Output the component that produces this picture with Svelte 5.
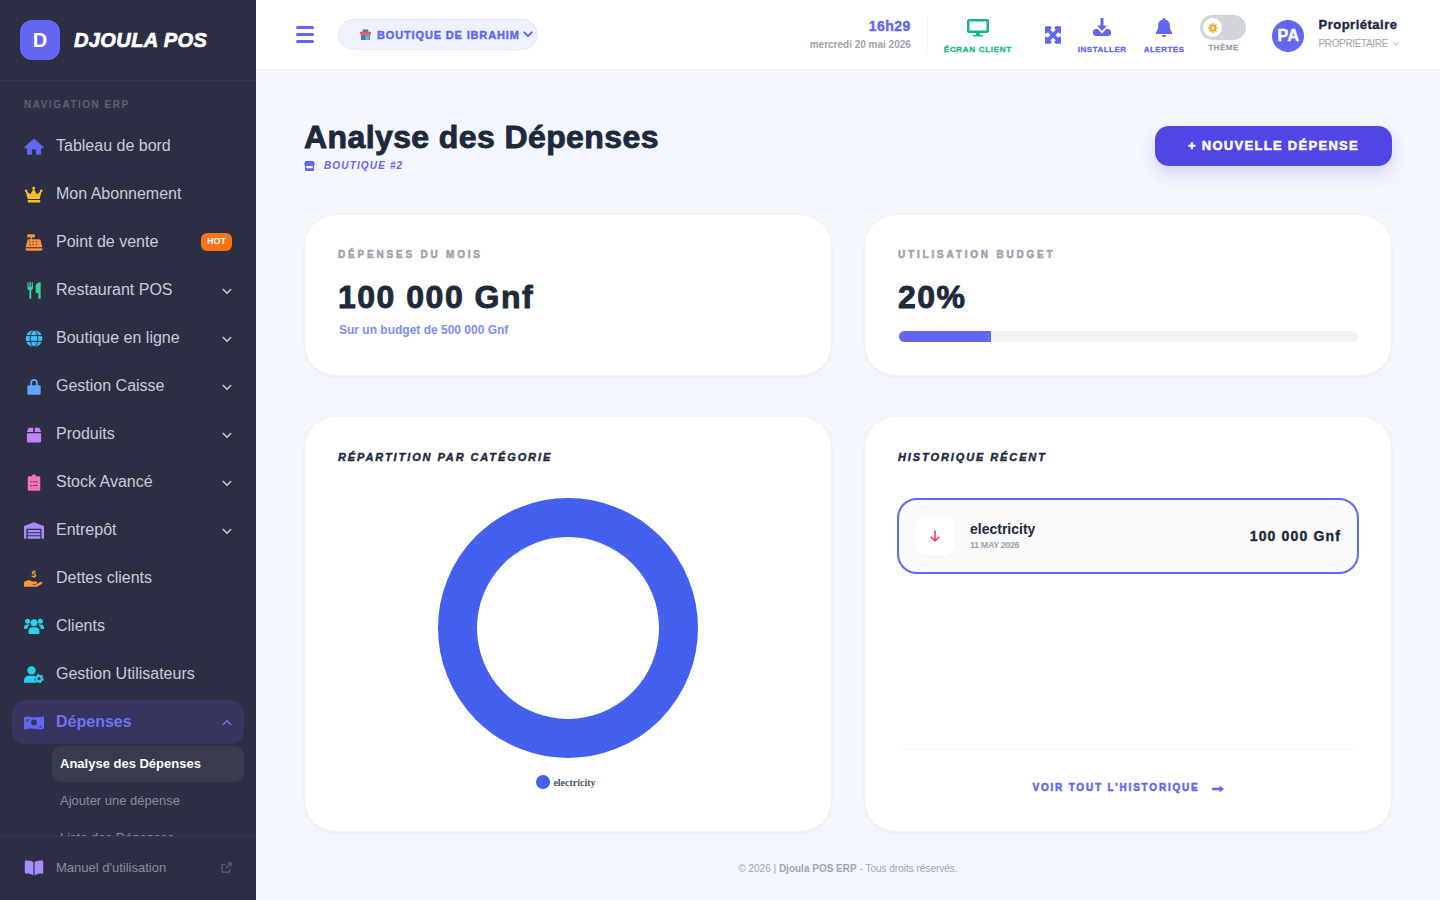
<script>
  const navItems = [
    { label: 'Tableau de bord', icon: 'home', color: '#6366f1' },
    { label: 'Mon Abonnement', icon: 'crown', color: '#fbbf24' },
    { label: 'Point de vente', icon: 'register', color: '#fb923c', hot: true },
    { label: 'Restaurant POS', icon: 'utensils', color: '#34d399', arrow: true },
    { label: 'Boutique en ligne', icon: 'globe', color: '#38bdf8', arrow: true },
    { label: 'Gestion Caisse', icon: 'lock', color: '#60a5fa', arrow: true },
    { label: 'Produits', icon: 'box', color: '#c084fc', arrow: true },
    { label: 'Stock Avancé', icon: 'clipboard', color: '#f472b6', arrow: true },
    { label: 'Entrepôt', icon: 'warehouse', color: '#a78bfa', arrow: true },
    { label: 'Dettes clients', icon: 'hand', color: '#fb923c' },
    { label: 'Clients', icon: 'users', color: '#22d3ee' },
    { label: 'Gestion Utilisateurs', icon: 'usercog', color: '#22d3ee' }
  ];
</script>

{#snippet chevron(up)}
  <svg class="chev" class:up viewBox="0 0 12 8" width="10" height="7"><path d="M1.500 1.500 6 6l4.500-4.500" fill="none" stroke="currentColor" stroke-width="1.800" stroke-linecap="round" stroke-linejoin="round"/></svg>
{/snippet}

{#snippet navIcon(name, color)}
  <svg class="nav-icon" viewBox="0 0 24 20" width="20" height="17" fill={color}>
    {#if name === 'home'}
      <path d="M12 .5.6 10.600a.8.8 0 0 0 .5 1.400H3.500v6.800a1 1 0 0 0 1 1.200h5v-6.500h5V20h5a1 1 0 0 0 1-1.200V12h2.400a.8.8 0 0 0 .5-1.400z"/>
    {:else if name === 'crown'}
      <path d="M4.500 16.500h15v1.800a1.200 1.200 0 0 1-1.200 1.200H5.700a1.200 1.200 0 0 1-1.200-1.200zM4.400 15.500 2.400 7.200a1.600 1.600 0 1 1 1.400-.6l3.900 3 3.200-5.600a1.700 1.700 0 1 1 1.400 0l3.200 5.600 3.900-3a1.600 1.600 0 1 1 1.400.6l-2 8.300z"/>
    {:else if name === 'register'}
      <path d="M4 0h9v4H9.500v2H18a2 2 0 0 1 2 1.700l2 8H2l2-8A2 2 0 0 1 6 6h2V4H4zM2 17h20v1.400a1.600 1.600 0 0 1-1.600 1.600H3.600A1.600 1.600 0 0 1 2 18.400z"/>
      <g fill="#2c2f44" opacity=".7"><rect x="6" y="8.500" width="2" height="1.300"/><rect x="10" y="8.500" width="2" height="1.300"/><rect x="14" y="8.500" width="2" height="1.300"/><rect x="6" y="12" width="2" height="1.300"/><rect x="10" y="12" width="2" height="1.300"/><rect x="14" y="12" width="2" height="1.300"/></g>
    {:else if name === 'utensils'}
      <path d="M4 0h1.400v5.500h1.100V0h1.700v5.500h1.100V0h1.400v7c0 1.400-.9 2.500-2 2.900V20H6.500V9.900C5 9.500 4 8.400 4 7zM20 0v20h-2.800v-7H14V5c0-3 3-5 6-5z"/>
    {:else if name === 'globe'}
      <circle cx="12" cy="10" r="10"/>
      <g fill="none" stroke="#2c2f44" stroke-width="1.200"><ellipse cx="12" cy="10" rx="4.500" ry="10"/><path d="M2 6.500h20M2 13.500h20"/></g>
    {:else if name === 'lock'}
      <path d="M7.500 9V5.500a4.500 4.500 0 0 1 9 0V9h-2.200V5.500a2.300 2.300 0 0 0-4.600 0V9zM5.500 8.500h13A1.500 1.500 0 0 1 20 10v8.500a1.500 1.500 0 0 1-1.500 1.500h-13A1.500 1.500 0 0 1 4 18.500V10a1.500 1.500 0 0 1 1.500-1.500z"/>
    {:else if name === 'box'}
      <path d="M6.500 2H11v5H3.500L5 3.200A1.600 1.600 0 0 1 6.500 2zM13 2h4.500A1.600 1.600 0 0 1 19 3.200L20.500 7H13zM3.500 8.500h17v9.600a1.500 1.500 0 0 1-1.500 1.500H5a1.500 1.500 0 0 1-1.500-1.500z"/>
    {:else if name === 'clipboard'}
      <path fill-rule="evenodd" d="M12 0a2.500 2.500 0 0 1 2.400 2.500H18A1.500 1.500 0 0 1 19.500 4v14.500A1.500 1.500 0 0 1 18 20H6a1.500 1.500 0 0 1-1.500-1.500V4A1.500 1.500 0 0 1 6 2.500h3.600A2.500 2.500 0 0 1 12 0zM7.500 8.500v1.500H9V8.500zm3 .2v1.100h6V8.700zm-3 4.300v1.500H9V13zm3 .2v1.100h6v-1.100z"/>
    {:else if name === 'warehouse'}
      <path fill-rule="evenodd" d="M12 0 24 4.500V20h-3V8H3v12H0V4.500z"/>
      <path d="M4.500 9.500h15v2.500h-15zm0 3.700h15v2.500h-15zm0 3.700h15V20h-15z"/>
    {:else if name === 'hand'}
      <path d="M0 14.500c2-1.800 5-2.800 7-2l3.500 1.200h3.800a1.500 1.500 0 0 1 0 3H10v.6h4.500l5.500-3.300c1.500-.7 3 1 1.600 2.200L16 20H0z"/>
      <path d="M11.200 0h1.400v1.200c.9.100 1.700.5 2.100 1L13.800 3.300c-.5-.4-1-.6-1.700-.6-.6 0-1 .2-1 .6 0 .9 3.700.6 3.700 3 0 1.200-.9 1.900-2.200 2.100v1.100h-1.400V8.400c-1-.1-1.900-.6-2.400-1.200l1-1.100c.5.500 1.200.8 1.900.8s1.100-.2 1.100-.7c0-1-3.600-.7-3.600-3 0-1.100.8-1.800 2-2z"/>
    {:else if name === 'users'}
      <circle cx="12" cy="5.500" r="4.200"/><circle cx="4.300" cy="3.800" r="3"/><circle cx="19.700" cy="3.800" r="3"/>
      <path d="M5.500 19v-3.500c0-3 2.500-4.500 4.500-4.500h4c2 0 4.500 1.500 4.500 4.500V19zM0 11.500C0 8.500 1.800 7.500 3.500 7.500H6c.5 0 1 .2 1.300.5-2 1-3.300 2.800-3.500 5H1a1 1 0 0 1-1-1zM24 11.500c0-3-1.800-4-3.500-4H18c-.5 0-1 .2-1.300.5 2 1 3.300 2.800 3.500 5h2.800a1 1 0 0 0 1-1z"/>
    {:else if name === 'usercog'}
      <circle cx="9" cy="5" r="5"/>
      <path d="M0 20v-3c0-3.500 2.500-5.500 5.500-5.500h7c.5 0 1 .1 1.500.2V20z"/>
      <circle cx="18" cy="15" r="5.500" fill="#2c2f44"/>
      <circle cx="18" cy="15" r="3.200" fill="none" stroke={color} stroke-width="2.600"/>
      <circle cx="18" cy="15" r="5" fill="none" stroke={color} stroke-width="1.800" stroke-dasharray="2.200 3"/>
    {:else if name === 'money'}
      <path fill-rule="evenodd" d="M1 3.500C6 1 12 6 23 2.500c.6-.2 1 .1 1 .7v13.300c0 .4-.2.700-.6.900-5.400 2.500-11.400-2.500-22.400 1-.6.200-1-.1-1-.7V4.400c0-.4.200-.7.600-.9zM12 6.500a3.500 3.500 0 1 0 0 7 3.500 3.500 0 0 0 0-7zM3 6.300v2.500a3 3 0 0 0 2.500-2.900zM21 13.500a3 3 0 0 0-2.500 2.700l2.500-.4z"/>
    {:else if name === 'book'}
      <path d="M11.300 3.300v16.200c-2.500-1.800-6.300-2.200-10.300-2.200V2.700c0-.6.400-1 1-1 3.500 0 7 .3 9.300 1.600zM12.700 3.300v16.200c2.500-1.800 6.300-2.200 10.300-2.200V2.700c0-.6-.4-1-1-1-3.500 0-7 .3-9.300 1.600z"/>
    {/if}
  </svg>
{/snippet}

<div class="layout">
  <aside class="sidebar">
    <div class="brand">
      <div class="logo">D</div>
      <div class="brand-name">DJOULA POS</div>
    </div>
    <nav class="nav">
      <div class="nav-title">NAVIGATION ERP</div>
      {#each navItems as item}
        <div class="nav-item">
          {@render navIcon(item.icon, item.color)}
          <span class="nav-label">{item.label}</span>
          {#if item.hot}<span class="hot">HOT</span>{/if}
          {#if item.arrow}{@render chevron(false)}{/if}
        </div>
      {/each}
      <div class="nav-item active">
        {@render navIcon('money', '#6366f1')}
        <span class="nav-label">Dépenses</span>
        {@render chevron(true)}
      </div>
      <div class="sub">
        <div class="sub-item current">Analyse des Dépenses</div>
        <div class="sub-item">Ajouter une dépense</div>
        <div class="sub-item">Liste des Dépenses</div>
      </div>
    </nav>
    <div class="side-foot">
      {@render navIcon('book', '#a78bfa')}
      <span class="manual">Manuel d'utilisation</span>
      <svg viewBox="0 0 12 12" width="11" height="11" fill="none" stroke="#5c6070" stroke-width="1.300"><path d="M9.500 7v3a1 1 0 0 1-1 1H2a1 1 0 0 1-1-1V3.500a1 1 0 0 1 1-1h3M7.500 1H11v3.500M11 1 5.500 6.500"/></svg>
    </div>
  </aside>

  <div class="right">
    <header class="topbar">
      <div class="menu"><span></span><span></span><span></span></div>
      <div class="store">
        <svg viewBox="0 0 12 12" width="11" height="11"><rect x="3" y="0.500" width="6" height="3" fill="#6b7280"/><rect y="3" width="12" height="3" fill="#f4516c"/><rect x="1" y="6" width="10" height="6" fill="#64748b"/><rect x="6" y="7" width="4" height="5" fill="#4fc3e8"/></svg>
        <span>BOUTIQUE DE IBRAHIM</span>
        <svg class="store-chev" viewBox="0 0 12 8" width="10" height="7"><path d="M1.500 1.500 6 6l4.500-4.500" fill="none" stroke="#6366f1" stroke-width="2.400" stroke-linecap="round" stroke-linejoin="round"/></svg>
      </div>
      <div class="spacer"></div>
      <div class="clock">
        <div class="time">16h29</div>
        <div class="date">mercredi 20 mai 2026</div>
      </div>
      <div class="tool screen">
        <svg viewBox="0 0 22 20" width="22" height="20" fill="#10b981"><path fill-rule="evenodd" d="M2 1h18a2 2 0 0 1 2 2v10a2 2 0 0 1-2 2H2a2 2 0 0 1-2-2V3a2 2 0 0 1 2-2zm.500 2.500v9h17v-9z"/><path d="M9 15h4v2h3v1.500H6V17h3z"/></svg>
        <span>ÉCRAN CLIENT</span>
      </div>
      <svg class="expand" viewBox="0 0 448 512" width="16" height="18" fill="#6366f1" stroke="#6366f1" stroke-width="44"><path d="M448 344v112a23.94 23.94 0 0 1-24 24H312c-21.39 0-32.09-25.9-17-41l36.2-36.2L224 295.6 116.77 402.9 153 439c15.09 15.1 4.39 41-17 41H24a23.94 23.94 0 0 1-24-24V344c0-21.4 25.89-32.1 41-17l36.19 36.2L184.46 256 77.18 148.7 41 185c-15.1 15.1-41 4.4-41-17V56a23.94 23.94 0 0 1 24-24h112c21.39 0 32.09 25.9 17 41l-36.2 36.2L224 216.4l107.23-107.3L295 73c-15.09-15.1-4.39-41 17-41h112a23.94 23.94 0 0 1 24 24v112c0 21.4-25.89 32.1-41 17l-36.19-36.2L263.54 256l107.28 107.3L407 327.1c15.1-15.2 41-4.5 41 16.9z"/></svg>
      <div class="tool install">
        <svg viewBox="0 0 18 20" width="18" height="20" fill="#6366f1"><path d="M7.500 0h3v7.500H14L9 13 4 7.500h3.500z"/><path d="M3 11h1.800L9 15.500 13.200 11H15a3 3 0 0 1 3 3v1a3 3 0 0 1-3 3H3a3 3 0 0 1-3-3v-1a3 3 0 0 1 3-3z"/></svg>
        <span>INSTALLER</span>
      </div>
      <div class="tool alerts">
        <svg viewBox="0 0 16 20" width="16" height="20" fill="#6366f1"><path d="M8 0a1.300 1.300 0 0 1 1.300 1.500C12 2 13.800 4.300 13.800 7c0 4.500 1 5.800 2.200 7.200V16H0v-1.800C1.200 12.800 2.200 11.500 2.200 7c0-2.700 1.800-5 4.500-5.500A1.300 1.300 0 0 1 8 0zM5.800 17h4.400A2.200 2.200 0 0 1 8 19a2.200 2.200 0 0 1-2.200-2z"/></svg>
        <span>ALERTES</span>
      </div>
      <div class="tool theme">
        <div class="toggle">
          <div class="knob">
            <svg viewBox="0 0 12 12" width="10" height="10"><circle cx="6" cy="6" r="3.200" fill="none" stroke="#f59e0b" stroke-width="2"/><path d="M6 0v12M0 6h12M1.800 1.800l8.400 8.400M10.200 1.800l-8.400 8.400" stroke="#f59e0b" stroke-width="1.500" stroke-dasharray="2 8"/></svg>
          </div>
        </div>
        <span>THÈME</span>
      </div>
      <div class="user">
        <div class="avatar">PA</div>
        <div class="who">
          <div class="name">Propriétaire</div>
          <div class="role"><span>PROPRIÉTAIRE</span>
            <svg viewBox="0 0 12 8" width="8" height="6"><path d="M1.500 1.500 6 6l4.500-4.500" fill="none" stroke="#9ca3af" stroke-width="1.400"/></svg>
          </div>
        </div>
      </div>
    </header>

    <main class="page">
      <div class="page-head">
        <div>
          <h1>Analyse des Dépenses</h1>
          <div class="crumb">
            <svg viewBox="0 0 12 11" width="11" height="10" fill="#6366f1"><path d="M1.500 0h9L12 3.500a1.500 1.500 0 0 1-1 1.400V10a1 1 0 0 1-1 1H2a1 1 0 0 1-1-1V4.900A1.500 1.500 0 0 1 0 3.500zM2.500 5.500V8h7V5.500z"/></svg>
            <span>BOUTIQUE #2</span>
          </div>
        </div>
        <button class="primary">+ NOUVELLE DÉPENSE</button>
      </div>

      <div class="grid stats">
        <section class="card stat">
          <div class="eyebrow">DÉPENSES DU MOIS</div>
          <div class="big">100 000 Gnf</div>
          <div class="hint">Sur un budget de 500 000 Gnf</div>
        </section>
        <section class="card stat">
          <div class="eyebrow">UTILISATION BUDGET</div>
          <div class="big">20%</div>
          <div class="bar"><div class="fill" style="width: 20%"></div></div>
        </section>
      </div>

      <div class="grid panels">
        <section class="card panel">
          <h2>RÉPARTITION PAR CATÉGORIE</h2>
          <div class="chart">
            <svg viewBox="0 0 260 260" width="260" height="260"><circle cx="130" cy="130" r="110.500" fill="none" stroke="#4361ee" stroke-width="39"/></svg>
            <div class="legend"><i></i><span>electricity</span></div>
          </div>
        </section>
        <section class="card panel history">
          <h2>HISTORIQUE RÉCENT</h2>
          <div class="row">
            <div class="row-icon">
              <svg viewBox="0 0 12 12" width="12" height="12" fill="none" stroke="#f43f5e" stroke-width="1.600" stroke-linecap="round" stroke-linejoin="round"><path d="M6 1v10M2 7l4 4 4-4"/></svg>
            </div>
            <div class="row-text">
              <div class="row-title">electricity</div>
              <div class="row-date">11 MAY 2026</div>
            </div>
            <div class="row-amount">100 000 Gnf</div>
          </div>
          <div class="history-foot">
            <span>VOIR TOUT L'HISTORIQUE</span>
            <svg viewBox="0 0 12 8" width="12" height="8" fill="#6366f1"><path d="M0 2.800h7.500V0.500L12 4 7.500 7.500V5.200H0z"/></svg>
          </div>
        </section>
      </div>

      <footer class="foot"><span>© 2026 | <b>Djoula POS ERP</b> - Tous droits réservés.</span></footer>
    </main>
  </div>
</div>

<style>
  :global(body) {
    margin: 0;
    font-family: "Liberation Sans", Arial, sans-serif;
    background: #f4f7fe;
  }
  .layout {
    display: flex;
    height: 900px;
    overflow: hidden;
  }
  .sidebar {
    width: 256px;
    flex: none;
    height: 900px;
    background: #2c2f44;
    display: flex;
    flex-direction: column;
  }
  .brand {
    height: 81px;
    box-sizing: border-box;
    padding: 0 20px;
    display: flex;
    align-items: center;
    gap: 14px;
    border-bottom: 1px solid #33364c;
    flex: none;
  }
  .logo {
    width: 40px;
    height: 40px;
    border-radius: 12px;
    background: #6366f1;
    color: #fff;
    font-weight: 700;
    font-size: 20px;
    display: flex;
    align-items: center;
    justify-content: center;
  }
  .brand-name {
    color: #fff;
    font-size: 20px;
    font-weight: 900;
    font-style: italic;
    letter-spacing: .4px;
    -webkit-text-stroke: .7px currentColor;
  }
  .nav {
    flex: 1;
    min-height: 0;
    overflow: hidden;
    padding: 16px 12px 0;
  }
  .nav-title {
    font-size: 10px;
    font-weight: 700;
    letter-spacing: 1.5px;
    color: #5c6070;
    padding: 0 12px;
    height: 16px;
    line-height: 16px;
    margin-bottom: 9px;
    padding-bottom: 2px;
  }
  .nav-item {
    height: 44px;
    margin-bottom: 4px;
    border-radius: 14px;
    padding: 0 12px;
    display: flex;
    align-items: center;
    color: #c8ccd6;
    font-size: 16px;
  }
  .nav-icon {
    flex: none;
    margin-right: 12px;
  }
  .nav-label {
    flex: 1;
  }
  .chev {
    color: #c8ccd6;
    margin-top: 2px;
  }
  .chev.up {
    transform: rotate(180deg);
    margin-top: 0;
  }
  .hot {
    background: #f97316;
    color: #fff;
    font-size: 9px;
    font-weight: 700;
    height: 18px;
    line-height: 16px;
    padding: 0 6px;
    border-radius: 6px;
  }
  .active {
    background: #35355f;
    color: #6f72f3;
    font-weight: 700;
    margin-bottom: 2px;
  }
  .active .chev {
    color: #6f72f3;
  }
  .sub {
    padding-left: 40px;
  }
  .sub-item {
    height: 36px;
    line-height: 36px;
    padding: 0 8px;
    border-radius: 10px;
    font-size: 13px;
    color: #8a8e9c;
    margin-bottom: 1px;
    white-space: nowrap;
  }
  .current {
    background: #383a4e;
    color: #fff;
    font-weight: 700;
  }
  .side-foot {
    flex: none;
    height: 64px;
    box-sizing: border-box;
    border-top: 1px solid #33364c;
    padding: 0 24px 2px;
    display: flex;
    align-items: center;
    background: #2c2f44;
  }
  .manual {
    flex: 1;
    font-size: 13px;
    color: #8a8e9c;
  }
  .right {
    flex: 1;
    min-width: 0;
    display: flex;
    flex-direction: column;
  }
  .topbar {
    height: 70px;
    box-sizing: border-box;
    flex: none;
    background: #fff;
    border-bottom: 1px solid #f1f2f6;
    display: flex;
    align-items: center;
    padding: 0 40px;
  }
  .menu {
    width: 18px;
    display: flex;
    flex-direction: column;
    gap: 4px;
    margin-right: 24px;
  }
  .menu span {
    height: 3px;
    border-radius: 2px;
    background: #6366f1;
  }
  .store {
    height: 31px;
    box-sizing: border-box;
    width: 200px;
    border: 1px solid #e0e7ff;
    border-radius: 16px;
    background: #eef2ff;
    display: flex;
    align-items: center;
    gap: 6px;
    padding-left: 21px;
    color: #6366f1;
    font-size: 11px;
    font-weight: 900;
    letter-spacing: .85px;
    -webkit-text-stroke: .4px currentColor;
    white-space: nowrap;
  }
  .store-chev {
    margin-left: -3px;
  }
  .spacer {
    flex: 1;
  }
  .clock {
    text-align: right;
    padding-right: 16px;
    border-right: 1px solid #f3f4f6;
    height: 36px;
  }
  .time {
    font-size: 14px;
    font-weight: 900;
    color: #6366f1;
    line-height: 18px;
    letter-spacing: .5px;
    -webkit-text-stroke: .4px currentColor;
  }
  .date {
    font-size: 10px;
    font-weight: 700;
    color: #9ca3af;
    line-height: 16px;
    margin-top: 2px;
  }
  .tool {
    display: flex;
    flex-direction: column;
    align-items: center;
    font-size: 8px;
    line-height: 10px;
    font-weight: 900;
    color: #6366f1;
    letter-spacing: .5px;
    -webkit-text-stroke: .3px currentColor;
    gap: 7px;
    margin-top: 3px;
  }
  .screen {
    color: #10b981;
    margin-left: 16px;
    letter-spacing: .7px;
  }
  .expand {
    margin-left: 33px;
  }
  .install {
    margin-left: 17px;
  }
  .alerts {
    margin-left: 17px;
  }
  .theme {
    margin-left: 16px;
    color: #9ca3af;
    gap: 3px;
    margin-top: -1px;
  }
  .toggle {
    width: 46px;
    height: 25px;
    border-radius: 13px;
    background: #d1d5db;
    box-sizing: border-box;
    padding: 3px;
  }
  .knob {
    width: 19px;
    height: 19px;
    border-radius: 50%;
    background: #fff;
    display: flex;
    align-items: center;
    justify-content: center;
  }
  .user {
    display: flex;
    align-items: center;
    gap: 14px;
    margin-left: 26px;
  }
  .avatar {
    width: 32px;
    height: 32px;
    margin-top: 2px;
    border-radius: 50%;
    background: #6366f1;
    color: #fff;
    font-size: 16px;
    font-weight: 900;
    letter-spacing: .5px;
    -webkit-text-stroke: .5px currentColor;
    display: flex;
    align-items: center;
    justify-content: center;
  }
  .name {
    font-size: 13px;
    font-weight: 900;
    color: #1e293b;
    line-height: 16px;
    letter-spacing: .5px;
    -webkit-text-stroke: .4px currentColor;
    margin-top: -2px;
  }
  .role {
    font-size: 10px;
    color: #9ca3af;
    line-height: 14px;
    margin-top: 4px;
    letter-spacing: -.35px;
    display: flex;
    align-items: center;
    gap: 4px;
  }
  .page {
    flex: 1;
    min-height: 0;
    padding: 48px 48px 0;
    box-sizing: border-box;
    display: flex;
    flex-direction: column;
  }
  .page-head {
    display: flex;
    justify-content: space-between;
    align-items: flex-start;
    margin-bottom: 44px;
    height: 52px;
  }
  h1 {
    margin: 0;
    font-size: 32px;
    line-height: 38px;
    font-weight: 900;
    color: #1e293b;
    letter-spacing: .4px;
    -webkit-text-stroke: .9px currentColor;
  }
  .crumb {
    display: flex;
    align-items: center;
    gap: 9px;
    font-size: 10px;
    font-weight: 700;
    font-style: italic;
    letter-spacing: 1.15px;
    color: #6366f1;
    margin-top: 4px;
  }
  .primary {
    width: 237px;
    height: 40px;
    margin-top: 8px;
    padding: 0 0 2px;
    border: 0;
    border-radius: 14px;
    background: #4f46e5;
    color: #fff;
    font: 900 13px "Liberation Sans", Arial, sans-serif;
    letter-spacing: 1.3px;
    -webkit-text-stroke: .5px currentColor;
    box-shadow: 0 8px 16px rgba(79, 70, 229, .2);
  }
  .grid {
    display: grid;
    grid-template-columns: 1fr 1fr;
    gap: 32px;
  }
  .card {
    background: #fff;
    border-radius: 32px;
    border: 1px solid #f0f2f7;
    box-sizing: border-box;
    box-shadow: 0 1px 3px rgba(0, 0, 0, .05);
  }
  .stats {
    margin-bottom: 40px;
  }
  .stat {
    height: 162px;
    padding: 34px 33px;
  }
  .eyebrow {
    font-size: 10px;
    font-weight: 900;
    letter-spacing: 2.8px;
    -webkit-text-stroke: .5px currentColor;
    color: #9ca3af;
    line-height: 12px;
  }
  .big {
    font-size: 32px;
    font-weight: 900;
    color: #1e293b;
    line-height: 38px;
    margin-top: 17px;
    letter-spacing: 1.5px;
    -webkit-text-stroke: .9px currentColor;
  }
  .hint {
    font-size: 12px;
    font-weight: 700;
    color: #818cf8;
    margin-top: 7px;
    margin-left: 1px;
  }
  .bar {
    height: 11px;
    background: #f3f4f6;
    border-radius: 6px;
    overflow: hidden;
    margin-top: 15px;
    margin-left: 1px;
  }
  .fill {
    height: 100%;
    background: #6366f1;
  }
  .panel {
    height: 416px;
    padding: 33px;
    display: flex;
    flex-direction: column;
  }
  h2 {
    margin: 0;
    font-size: 11px;
    line-height: 14px;
    font-weight: 900;
    font-style: italic;
    letter-spacing: 1.9px;
    -webkit-text-stroke: .4px currentColor;
    color: #1e293b;
  }
  .chart {
    display: flex;
    flex-direction: column;
    align-items: center;
    margin-top: 34px;
  }
  .legend {
    display: flex;
    align-items: center;
    gap: 3px;
    margin-top: 17px;
    padding-right: 4px;
    font-family: "Liberation Serif", serif;
    font-weight: 700;
    font-size: 10px;
    color: #4b5563;
  }
  .legend i {
    width: 14px;
    height: 14px;
    border-radius: 50%;
    background: #4361ee;
  }
  .row {
    margin: 34px -1px 0;
    height: 76px;
    box-sizing: border-box;
    border: 2px solid #6366f1;
    border-radius: 20px;
    background: #f9fafb;
    display: flex;
    align-items: center;
    padding: 0 16px;
    gap: 15px;
  }
  .row-icon {
    width: 40px;
    height: 40px;
    border-radius: 12px;
    background: #fff;
    box-shadow: 0 1px 2px rgba(0, 0, 0, .04);
    display: flex;
    align-items: center;
    justify-content: center;
  }
  .row-text {
    flex: 1;
    margin-top: -1px;
  }
  .row-title {
    font-size: 14px;
    font-weight: 700;
    color: #1e293b;
    line-height: 18px;
  }
  .row-date {
    font-size: 9px;
    font-weight: 700;
    color: #9ca3af;
    line-height: 12px;
    letter-spacing: -.4px;
    margin-top: 1px;
  }
  .row-amount {
    font-size: 14px;
    font-weight: 900;
    color: #1e293b;
    letter-spacing: 1.15px;
    -webkit-text-stroke: .4px currentColor;
  }
  .history-foot {
    margin-top: auto;
    border-top: 1px solid #f7f8fb;
    height: 49px;
    display: flex;
    align-items: flex-end;
    justify-content: center;
    gap: 12px;
    font-size: 10px;
    font-weight: 900;
    letter-spacing: 1.8px;
    -webkit-text-stroke: .5px currentColor;
    color: #6366f1;
    padding-bottom: 5px;
    box-sizing: border-box;
  }
  .foot {
    flex: 1;
    display: flex;
    justify-content: center;
    align-items: center;
    font-size: 10px;
    color: #9ca3af;
    border-top: 1px solid #f7f9fd;
    margin-top: 8px;
    padding-bottom: 4px;
  }
</style>
